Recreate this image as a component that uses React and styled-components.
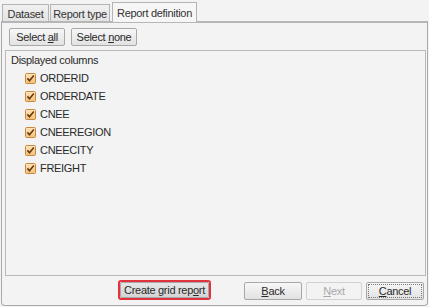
import React from "react";
import styled, { createGlobalStyle } from "styled-components";

const Global = createGlobalStyle`
  html, body { margin: 0; padding: 0; background: #f2f3f2; }
  body { font-family: "Liberation Sans", Arial, sans-serif; font-size: 11px; letter-spacing: -0.3px; color: #2a2a2a; }
`;

const Frame = styled.div`
  width: 429px;
  height: 307px;
  box-sizing: border-box;
  padding-top: 2px;
  display: flex;
  flex-direction: column;
  background: #f2f3f2;
`;

const TabBar = styled.div`
  height: 19px;
  display: flex;
  align-items: flex-end;
  padding-left: 2px;
  gap: 1px;
`;

const Tab = styled.div`
  box-sizing: border-box;
  width: ${(p) => p.$w}px;
  height: ${(p) => (p.$active ? 20 : 17)}px;
  margin-left: ${(p) => (p.$active ? 1 : 0)}px;
  border: 1px solid #b4b4b4;
  border-bottom: none;
  background: ${(p) => (p.$active ? "#f5f6f5" : "linear-gradient(#f1f1f1, #e3e3e3)")};
  color: #333;
  white-space: nowrap;
  display: flex;
  align-items: center;
  justify-content: center;
  padding-top: ${(p) => (p.$active ? 0 : 1)}px;
  position: relative;
  z-index: ${(p) => (p.$active ? 2 : 1)};
  margin-bottom: ${(p) => (p.$active ? -1 : 0)}px;
`;

const Panel = styled.div`
  flex: 1;
  margin: 0 1px 1px 1px;
  box-sizing: border-box;
  border: 1px solid #a9a9a9;
  border-top: 2px solid #b6b6b6;
  border-radius: 0 0 4px 4px;
  display: flex;
  flex-direction: column;
  padding: 5px 2px 0 2px;
`;

const Toolbar = styled.div`
  display: flex;
  gap: 6px;
  padding-left: 5px;
  height: 18px;
  margin-bottom: 4px;
`;

const Button = styled.button`
  box-sizing: border-box;
  height: ${(p) => p.$h || 18}px;
  width: ${(p) => p.$w}px;
  padding: 0;
  font: inherit;
  font-size: 11px;
  letter-spacing: -0.3px;
  white-space: nowrap;
  color: ${(p) => (p.$disabled ? "#a8a8a8" : "#2a2a2a")};
  border: 1px solid ${(p) => (p.$disabled ? "#d2d2d2" : "#a8a8a8")};
  border-radius: 2px;
  background: ${(p) =>
    p.$disabled ? "#f3f3f3" : p.$pressed ? "linear-gradient(#e6e6e6, #d4d4d4)" : "linear-gradient(#f7f7f7, #e2e2e2)"};
  display: flex;
  align-items: center;
  justify-content: center;
  cursor: default;
  outline: ${(p) => (p.$focus ? "1px dotted #777" : "none")};
  outline-offset: -3px;
`;

const Highlight = styled.div`
  border: 2px solid #e2323e;
  border-radius: 3px;
  display: flex;
  margin-left: 114px;
  margin-right: 33px;
`;

const GroupBox = styled.div`
  flex: 1;
  border: 1px solid #b9b9b9;
  margin: 0 0 0 1px;
  width: 421px;
  box-sizing: border-box;
  padding: 2px 0 0 5px;
  display: flex;
  flex-direction: column;
`;

const GroupTitle = styled.div`
  height: 15px;
  line-height: 15px;
`;

const List = styled.div`
  display: flex;
  flex-direction: column;
  padding-left: 14px;
  padding-top: 1px;
`;

const Row = styled.div`
  height: 18px;
  display: flex;
  align-items: center;
  gap: 4px;
`;

const Footer = styled.div`
  height: 29px;
  box-sizing: border-box;
  display: flex;
  align-items: flex-start;
  padding-top: 4px;
`;

const Nav = styled.div`
  display: flex;
  gap: 4px;
  margin-top: 2px;
`;

const CheckIcon = () => (
  <svg width="11" height="11" viewBox="0 0 11 11">
    <defs>
      <linearGradient id="cbg" x1="0" y1="0" x2="0" y2="1">
        <stop offset="0" stopColor="#fde6bd" />
        <stop offset="1" stopColor="#f3c07c" />
      </linearGradient>
    </defs>
    <rect x="0.5" y="0.5" width="10" height="10" rx="1" fill="url(#cbg)" stroke="#c8883c" />
    <path d="M2.4 5.4 L4.5 7.8 L8.8 2.4" fill="none" stroke="#6a3a0a" strokeWidth="1.6" />
  </svg>
);

const columns = ["ORDERID", "ORDERDATE", "CNEE", "CNEEREGION", "CNEECITY", "FREIGHT"];

export default function App() {
  return (
    <>
      <Global />
      <Frame>
        <TabBar>
          <Tab $w={47}>Dataset</Tab>
          <Tab $w={60}>Report type</Tab>
          <Tab $w={85} $active>Report definition</Tab>
        </TabBar>
        <Panel>
          <Toolbar>
            <Button $w={56}>Select&nbsp;<u>a</u>ll</Button>
            <Button $w={66}>Select&nbsp;<u>n</u>one</Button>
          </Toolbar>
          <GroupBox>
            <GroupTitle>Displayed columns</GroupTitle>
            <List>
              {columns.map((c) => (
                <Row key={c}>
                  <CheckIcon />
                  <span>{c}</span>
                </Row>
              ))}
            </List>
          </GroupBox>
          <Footer>
            <Highlight>
              <Button $w={89} $h={16} $pressed>Create grid rep<u>o</u>rt</Button>
            </Highlight>
            <Nav>
              <Button $w={58}><u>B</u>ack</Button>
              <Button $w={56} $disabled><u>N</u>ext</Button>
              <Button $w={58} $focus><u>C</u>ancel</Button>
            </Nav>
          </Footer>
        </Panel>
      </Frame>
    </>
  );
}
